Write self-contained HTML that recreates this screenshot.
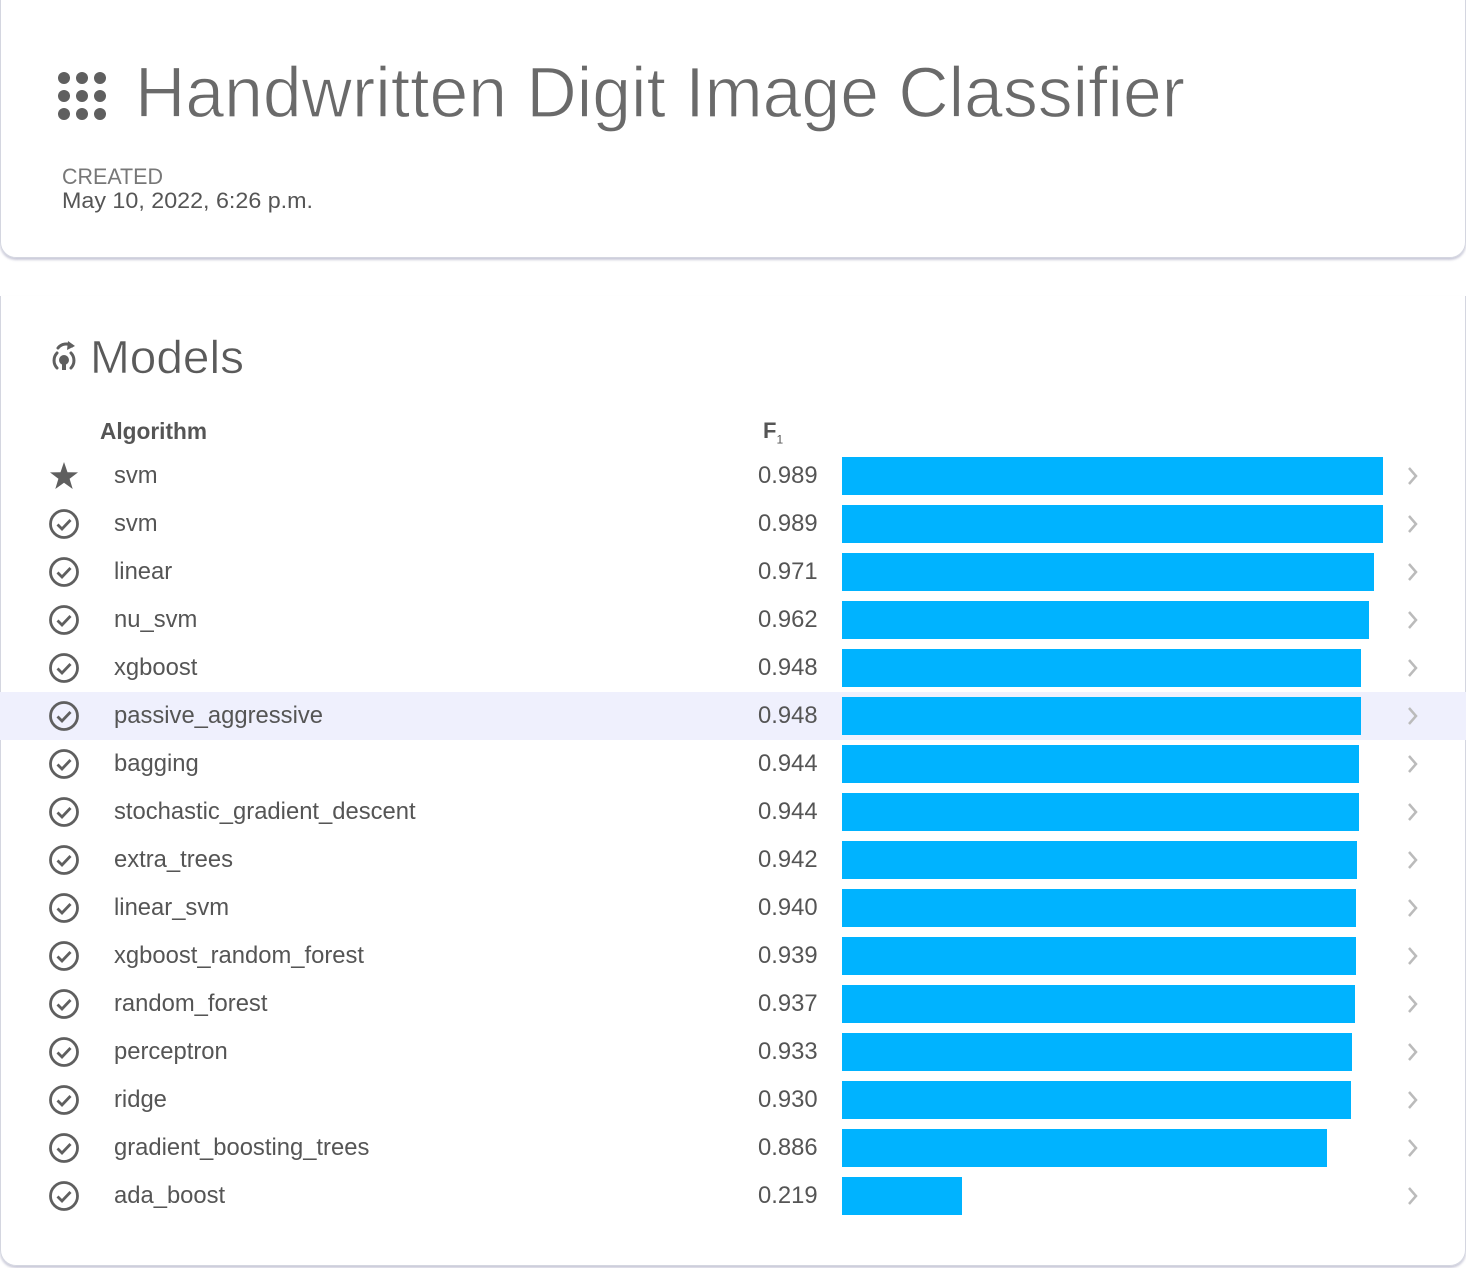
<!DOCTYPE html>
<html><head><meta charset="utf-8"><style>
*{margin:0;padding:0;box-sizing:border-box}
html,body{width:1466px;height:1268px;background:#fff;overflow:hidden;font-family:"Liberation Sans",sans-serif;color:#555}
.card1{position:absolute;left:0;top:-20px;width:1466px;height:278px;border:1.5px solid #d4d6e0;border-radius:0 0 16px 16px;box-shadow:0 2px 2px rgba(150,150,180,.5)}
.card2{position:absolute;left:0;top:296px;width:1466px;height:970px;border:1.5px solid #d4d6e0;border-top:none;border-radius:0 0 16px 16px;box-shadow:0 2px 2px rgba(150,150,180,.5)}
.abs{position:absolute}
.row{position:absolute;left:0;width:1466px;height:48px}
.row.hl{background:#eff0fd}
.name{position:absolute;left:114px;top:10px;font-size:23.8px;color:#555}
.val{position:absolute;left:758px;top:10px;font-size:23.8px;color:#555}
.bar{position:absolute;left:842px;top:5px;height:38px;background:#00b3ff}
.ic{position:absolute;left:48px;top:8px}
.chev{position:absolute;left:1406px;top:14px}
</style></head><body>
<div class="card1"></div>
<div class="card2"></div>
<svg class="abs" style="left:0;top:0" width="1466" height="260">
<g fill="#5f5f5f">
<circle cx="64" cy="78" r="6"/><circle cx="82" cy="78" r="6"/><circle cx="100" cy="78" r="6"/>
<circle cx="64" cy="96" r="6"/><circle cx="82" cy="96" r="6"/><circle cx="100" cy="96" r="6"/>
<circle cx="64" cy="114" r="6"/><circle cx="82" cy="114" r="6"/><circle cx="100" cy="114" r="6"/>
</g>
<text x="135" y="117" font-family="Liberation Sans" font-size="71" fill="#6a6a6a" textLength="1050" lengthAdjust="spacingAndGlyphs" stroke="#fff" stroke-width="1.2">Handwritten Digit Image Classifier</text>
<text x="62" y="184" font-family="Liberation Sans" font-size="22" fill="#777" textLength="101" lengthAdjust="spacingAndGlyphs">CREATED</text>
<text x="62" y="208" font-family="Liberation Sans" font-size="22.5" fill="#555" textLength="251" lengthAdjust="spacingAndGlyphs">May 10, 2022, 6:26 p.m.</text>
</svg>
<svg class="abs" style="left:0;top:320px" width="400" height="130">
<g transform="translate(0,-12)">
<g fill="none" stroke="#5f5f5f" stroke-width="3" stroke-linecap="round">
<path d="M57 45 A11 11 0 0 0 57 60"/>
<path d="M71 45 A11 11 0 0 1 71 60"/>
<path d="M58 40 A10 10 0 0 1 72 38"/>
</g>
<path d="M68 33 L75 38 L67 42 Z" fill="#5f5f5f"/>
<circle cx="64" cy="52" r="5" fill="#5f5f5f"/><rect x="62" y="55" width="4" height="7" fill="#5f5f5f"/>
</g>
<text x="90" y="53" font-family="Liberation Sans" font-size="46" fill="#5a5a5a" textLength="154" lengthAdjust="spacingAndGlyphs" stroke="#fff" stroke-width=".6">Models</text>
<text x="100" y="119" font-family="Liberation Sans" font-size="23" font-weight="bold" fill="#555" textLength="107" lengthAdjust="spacingAndGlyphs">Algorithm</text>
</svg>
<div class="abs" style="left:763px;top:418px;font-size:22px;font-weight:bold;color:#555">F<sub style="font-size:12px;font-weight:normal">1</sub></div>

<div class="row" style="top:452px"><svg class="ic" width="32" height="32"><path d="M16 2 L19.5 12.2 L30 12.4 L21.6 18.7 L24.7 29 L16 22.8 L7.3 29 L10.4 18.7 L2 12.4 L12.5 12.2 Z" fill="#5f5f5f"/></svg><span class="name">svm</span><span class="val">0.989</span><div class="bar" style="width:541px"></div><svg class="chev" width="14" height="20"><path d="M3 2 L10 10 L3 18" fill="none" stroke="#bbb" stroke-width="2.5"/></svg></div>
<div class="row" style="top:500px"><svg class="ic" width="32" height="32"><circle cx="16" cy="16" r="13.5" fill="none" stroke="#5f5f5f" stroke-width="2.8"/><path d="M9.5 16.5 L14 21 L22.5 12" fill="none" stroke="#5f5f5f" stroke-width="2.8"/></svg><span class="name">svm</span><span class="val">0.989</span><div class="bar" style="width:541px"></div><svg class="chev" width="14" height="20"><path d="M3 2 L10 10 L3 18" fill="none" stroke="#bbb" stroke-width="2.5"/></svg></div>
<div class="row" style="top:548px"><svg class="ic" width="32" height="32"><circle cx="16" cy="16" r="13.5" fill="none" stroke="#5f5f5f" stroke-width="2.8"/><path d="M9.5 16.5 L14 21 L22.5 12" fill="none" stroke="#5f5f5f" stroke-width="2.8"/></svg><span class="name">linear</span><span class="val">0.971</span><div class="bar" style="width:532px"></div><svg class="chev" width="14" height="20"><path d="M3 2 L10 10 L3 18" fill="none" stroke="#bbb" stroke-width="2.5"/></svg></div>
<div class="row" style="top:596px"><svg class="ic" width="32" height="32"><circle cx="16" cy="16" r="13.5" fill="none" stroke="#5f5f5f" stroke-width="2.8"/><path d="M9.5 16.5 L14 21 L22.5 12" fill="none" stroke="#5f5f5f" stroke-width="2.8"/></svg><span class="name">nu_svm</span><span class="val">0.962</span><div class="bar" style="width:527px"></div><svg class="chev" width="14" height="20"><path d="M3 2 L10 10 L3 18" fill="none" stroke="#bbb" stroke-width="2.5"/></svg></div>
<div class="row" style="top:644px"><svg class="ic" width="32" height="32"><circle cx="16" cy="16" r="13.5" fill="none" stroke="#5f5f5f" stroke-width="2.8"/><path d="M9.5 16.5 L14 21 L22.5 12" fill="none" stroke="#5f5f5f" stroke-width="2.8"/></svg><span class="name">xgboost</span><span class="val">0.948</span><div class="bar" style="width:519px"></div><svg class="chev" width="14" height="20"><path d="M3 2 L10 10 L3 18" fill="none" stroke="#bbb" stroke-width="2.5"/></svg></div>
<div class="row hl" style="top:692px"><svg class="ic" width="32" height="32"><circle cx="16" cy="16" r="13.5" fill="none" stroke="#5f5f5f" stroke-width="2.8"/><path d="M9.5 16.5 L14 21 L22.5 12" fill="none" stroke="#5f5f5f" stroke-width="2.8"/></svg><span class="name">passive_aggressive</span><span class="val">0.948</span><div class="bar" style="width:519px"></div><svg class="chev" width="14" height="20"><path d="M3 2 L10 10 L3 18" fill="none" stroke="#bbb" stroke-width="2.5"/></svg></div>
<div class="row" style="top:740px"><svg class="ic" width="32" height="32"><circle cx="16" cy="16" r="13.5" fill="none" stroke="#5f5f5f" stroke-width="2.8"/><path d="M9.5 16.5 L14 21 L22.5 12" fill="none" stroke="#5f5f5f" stroke-width="2.8"/></svg><span class="name">bagging</span><span class="val">0.944</span><div class="bar" style="width:517px"></div><svg class="chev" width="14" height="20"><path d="M3 2 L10 10 L3 18" fill="none" stroke="#bbb" stroke-width="2.5"/></svg></div>
<div class="row" style="top:788px"><svg class="ic" width="32" height="32"><circle cx="16" cy="16" r="13.5" fill="none" stroke="#5f5f5f" stroke-width="2.8"/><path d="M9.5 16.5 L14 21 L22.5 12" fill="none" stroke="#5f5f5f" stroke-width="2.8"/></svg><span class="name">stochastic_gradient_descent</span><span class="val">0.944</span><div class="bar" style="width:517px"></div><svg class="chev" width="14" height="20"><path d="M3 2 L10 10 L3 18" fill="none" stroke="#bbb" stroke-width="2.5"/></svg></div>
<div class="row" style="top:836px"><svg class="ic" width="32" height="32"><circle cx="16" cy="16" r="13.5" fill="none" stroke="#5f5f5f" stroke-width="2.8"/><path d="M9.5 16.5 L14 21 L22.5 12" fill="none" stroke="#5f5f5f" stroke-width="2.8"/></svg><span class="name">extra_trees</span><span class="val">0.942</span><div class="bar" style="width:515px"></div><svg class="chev" width="14" height="20"><path d="M3 2 L10 10 L3 18" fill="none" stroke="#bbb" stroke-width="2.5"/></svg></div>
<div class="row" style="top:884px"><svg class="ic" width="32" height="32"><circle cx="16" cy="16" r="13.5" fill="none" stroke="#5f5f5f" stroke-width="2.8"/><path d="M9.5 16.5 L14 21 L22.5 12" fill="none" stroke="#5f5f5f" stroke-width="2.8"/></svg><span class="name">linear_svm</span><span class="val">0.940</span><div class="bar" style="width:514px"></div><svg class="chev" width="14" height="20"><path d="M3 2 L10 10 L3 18" fill="none" stroke="#bbb" stroke-width="2.5"/></svg></div>
<div class="row" style="top:932px"><svg class="ic" width="32" height="32"><circle cx="16" cy="16" r="13.5" fill="none" stroke="#5f5f5f" stroke-width="2.8"/><path d="M9.5 16.5 L14 21 L22.5 12" fill="none" stroke="#5f5f5f" stroke-width="2.8"/></svg><span class="name">xgboost_random_forest</span><span class="val">0.939</span><div class="bar" style="width:514px"></div><svg class="chev" width="14" height="20"><path d="M3 2 L10 10 L3 18" fill="none" stroke="#bbb" stroke-width="2.5"/></svg></div>
<div class="row" style="top:980px"><svg class="ic" width="32" height="32"><circle cx="16" cy="16" r="13.5" fill="none" stroke="#5f5f5f" stroke-width="2.8"/><path d="M9.5 16.5 L14 21 L22.5 12" fill="none" stroke="#5f5f5f" stroke-width="2.8"/></svg><span class="name">random_forest</span><span class="val">0.937</span><div class="bar" style="width:513px"></div><svg class="chev" width="14" height="20"><path d="M3 2 L10 10 L3 18" fill="none" stroke="#bbb" stroke-width="2.5"/></svg></div>
<div class="row" style="top:1028px"><svg class="ic" width="32" height="32"><circle cx="16" cy="16" r="13.5" fill="none" stroke="#5f5f5f" stroke-width="2.8"/><path d="M9.5 16.5 L14 21 L22.5 12" fill="none" stroke="#5f5f5f" stroke-width="2.8"/></svg><span class="name">perceptron</span><span class="val">0.933</span><div class="bar" style="width:510px"></div><svg class="chev" width="14" height="20"><path d="M3 2 L10 10 L3 18" fill="none" stroke="#bbb" stroke-width="2.5"/></svg></div>
<div class="row" style="top:1076px"><svg class="ic" width="32" height="32"><circle cx="16" cy="16" r="13.5" fill="none" stroke="#5f5f5f" stroke-width="2.8"/><path d="M9.5 16.5 L14 21 L22.5 12" fill="none" stroke="#5f5f5f" stroke-width="2.8"/></svg><span class="name">ridge</span><span class="val">0.930</span><div class="bar" style="width:509px"></div><svg class="chev" width="14" height="20"><path d="M3 2 L10 10 L3 18" fill="none" stroke="#bbb" stroke-width="2.5"/></svg></div>
<div class="row" style="top:1124px"><svg class="ic" width="32" height="32"><circle cx="16" cy="16" r="13.5" fill="none" stroke="#5f5f5f" stroke-width="2.8"/><path d="M9.5 16.5 L14 21 L22.5 12" fill="none" stroke="#5f5f5f" stroke-width="2.8"/></svg><span class="name">gradient_boosting_trees</span><span class="val">0.886</span><div class="bar" style="width:485px"></div><svg class="chev" width="14" height="20"><path d="M3 2 L10 10 L3 18" fill="none" stroke="#bbb" stroke-width="2.5"/></svg></div>
<div class="row" style="top:1172px"><svg class="ic" width="32" height="32"><circle cx="16" cy="16" r="13.5" fill="none" stroke="#5f5f5f" stroke-width="2.8"/><path d="M9.5 16.5 L14 21 L22.5 12" fill="none" stroke="#5f5f5f" stroke-width="2.8"/></svg><span class="name">ada_boost</span><span class="val">0.219</span><div class="bar" style="width:120px"></div><svg class="chev" width="14" height="20"><path d="M3 2 L10 10 L3 18" fill="none" stroke="#bbb" stroke-width="2.5"/></svg></div>
</body></html>
